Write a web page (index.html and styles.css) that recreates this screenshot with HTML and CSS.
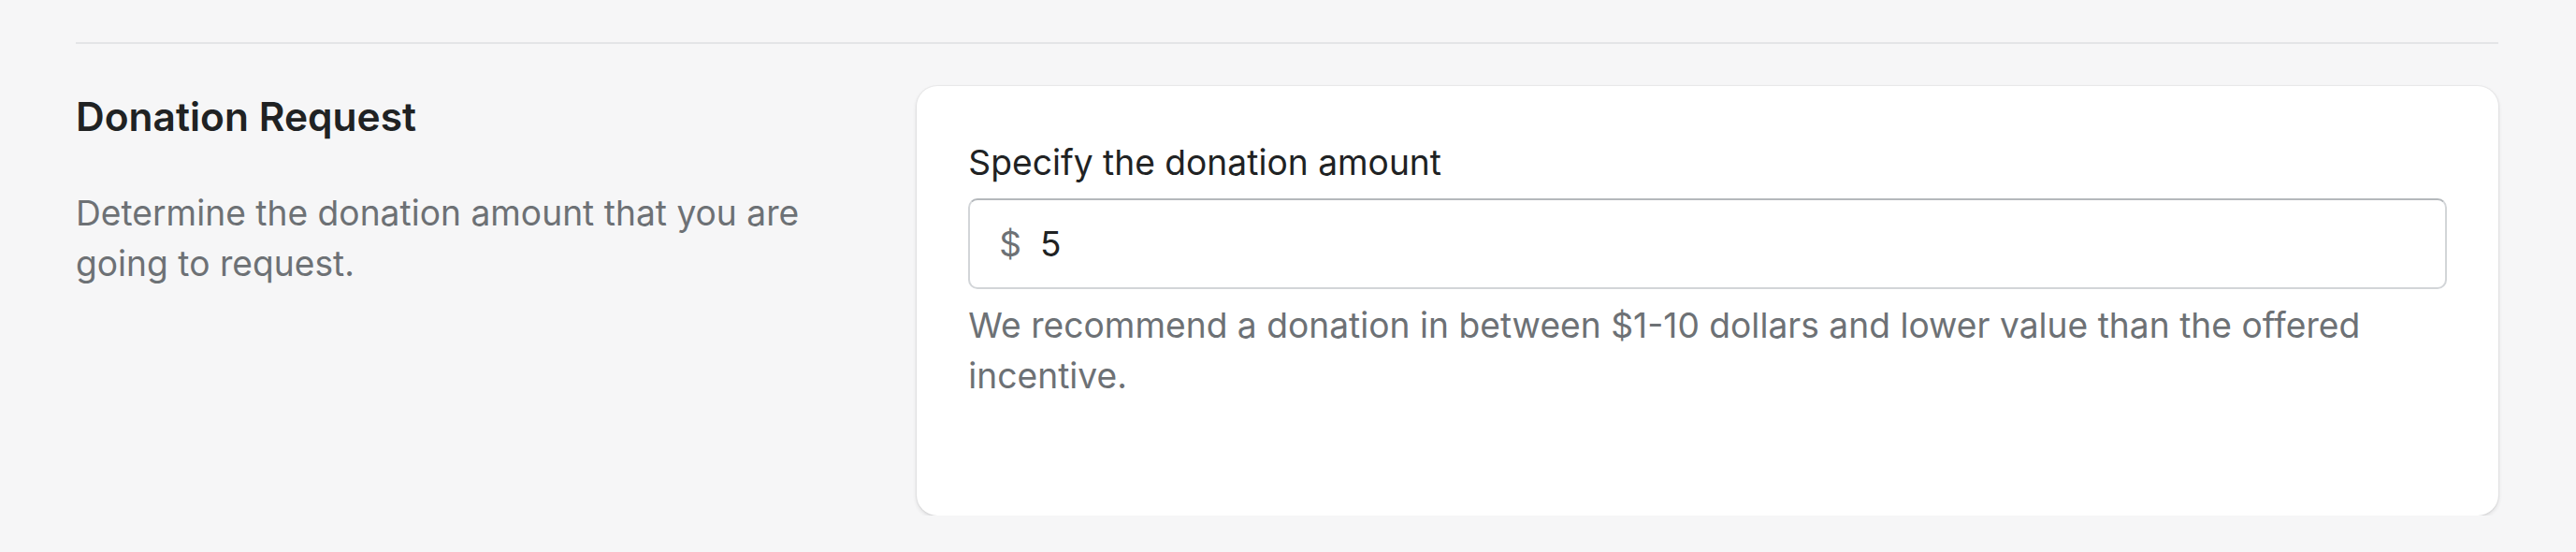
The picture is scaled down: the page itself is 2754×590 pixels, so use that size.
FILE: index.html
```html
<!DOCTYPE html>
<html lang="en">
<head>
<meta charset="utf-8">
<title>Donation Request</title>
<link rel="stylesheet" href="styles.css">
</head>
<body>
<div class="page">
  <hr class="divider">
  <section class="section">
    <div class="annotation">
      <h2 class="heading">Donation Request</h2>
      <p class="description">Determine the donation amount that you are going to request.</p>
    </div>
    <div class="card">
      <label class="label" for="amount">Specify the donation amount</label>
      <div class="field">
        <span class="prefix">$</span>
        <input class="input" id="amount" type="text" value="5">
      </div>
      <p class="help">We recommend a donation in between $1-10 dollars and lower value than the offered incentive.</p>
    </div>
  </section>
</div>
</body>
</html>
```

FILE: styles.css
```css
html, body {
  margin: 0;
  padding: 0;
  background: #f6f6f7;
}

body {
  font-family: Inter, "Noto Sans", "Liberation Sans", sans-serif;
  color: #202223;
}

.page {
  padding: 45px 83px 0 81px;
}

.divider {
  border: 0;
  border-top: 2px solid #e4e5e7;
  margin: 0 0 45px 0;
}

.section {
  display: grid;
  grid-template-columns: 1fr 2fr;
  column-gap: 54px;
  align-items: start;
}

.annotation {
  padding-top: 6px;
}

.heading {
  margin: 0;
  font-size: 42.5px;
  line-height: 54px;
  font-weight: 600;
  color: #202223;
}

.description {
  margin: 49px 0 0 0;
  font-size: 37.2px;
  line-height: 54px;
  color: #6d7175;
}

.card {
  background: #ffffff;
  border-radius: 22px;
  padding: 55px 55px 122px 55px;
  box-shadow: 0 0 0 1px rgba(63, 63, 68, 0.05), 0 2px 4px rgba(63, 63, 68, 0.16);
}

.label {
  display: block;
  font-size: 37.2px;
  line-height: 54px;
  color: #202223;
}

.field {
  margin-top: 11px;
  display: flex;
  align-items: center;
  height: 97px;
  box-sizing: border-box;
  border: 2px solid #d2d5d8;
  border-top-color: #b4b8bc;
  border-radius: 10px;
  padding: 0 31px;
  background: #fff;
}

.prefix {
  font-size: 37px;
  color: #6d7175;
  margin-right: 20px;
}

.input {
  flex: 1;
  border: 0;
  outline: none;
  padding: 0;
  font-family: inherit;
  font-size: 37px;
  color: #202223;
  background: transparent;
}

.help {
  margin: 12px 0 0 0;
  font-size: 37.2px;
  line-height: 54px;
  color: #6d7175;
}
```
